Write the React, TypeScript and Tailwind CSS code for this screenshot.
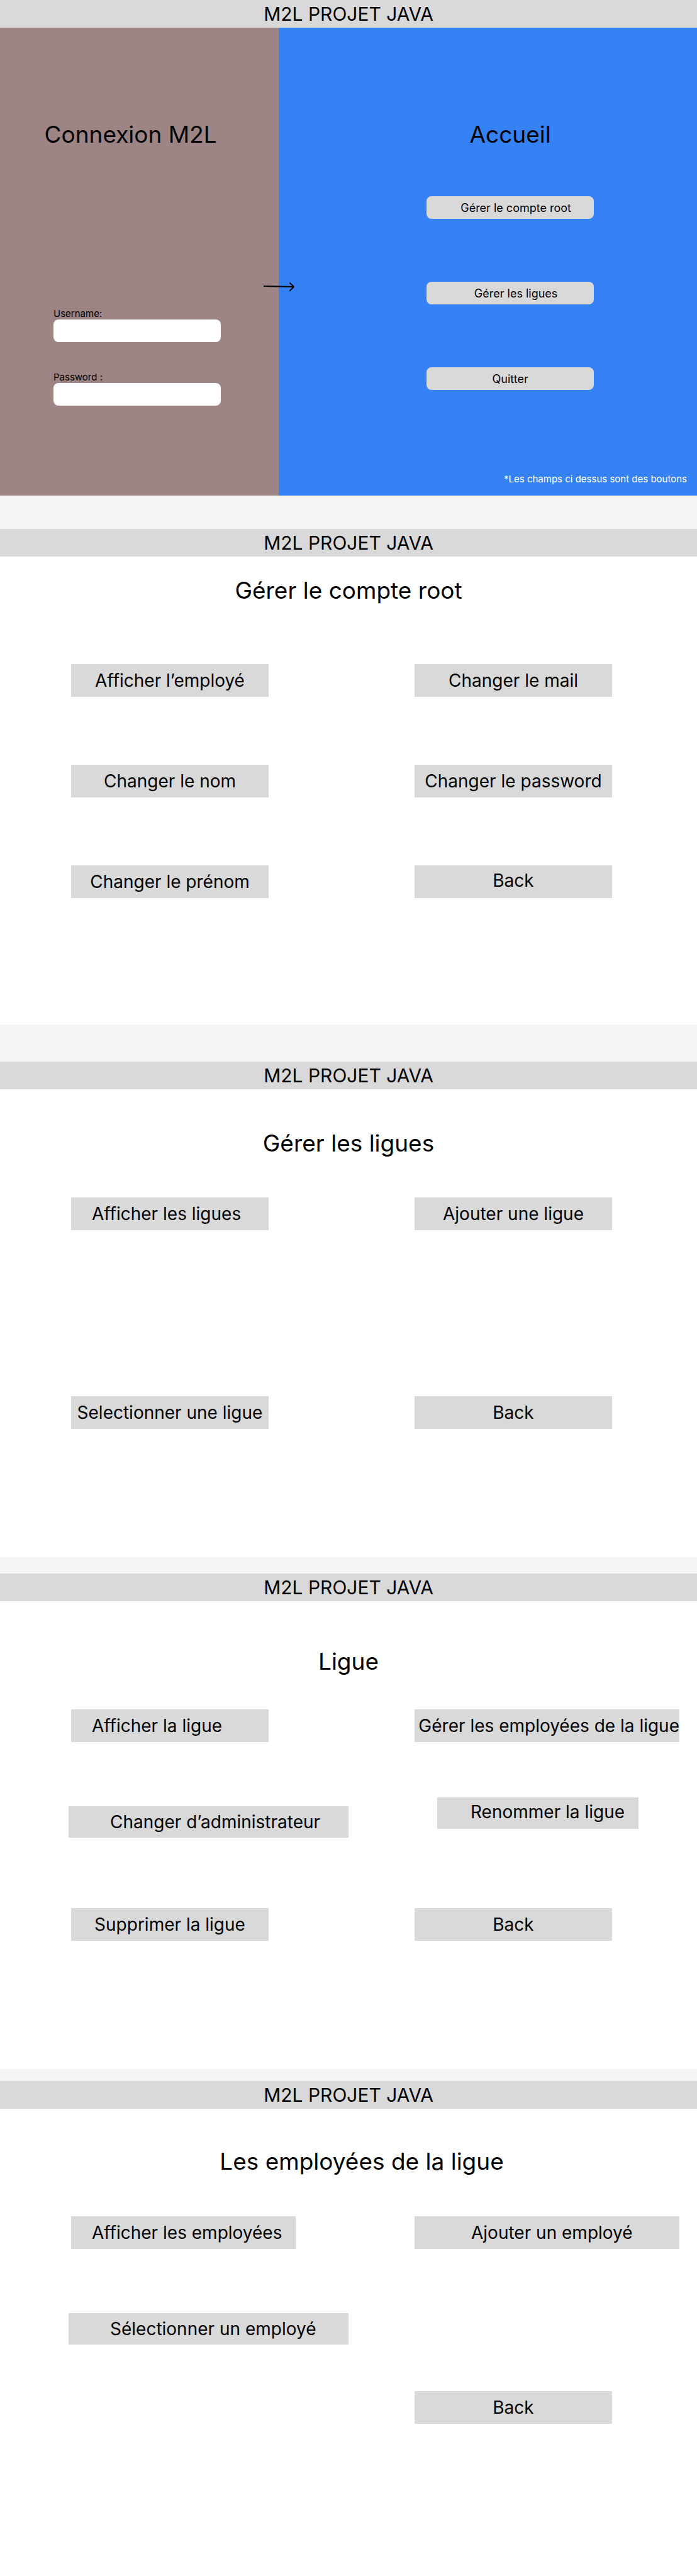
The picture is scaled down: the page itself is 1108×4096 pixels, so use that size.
import type { ReactNode } from "react";

function Header() {
  return (
    <header className="bg-[#d9d9d9] py-1 text-center text-[30px] leading-9">
      M2L PROJET JAVA
    </header>
  );
}

function Title({ children, className = "" }: { children: ReactNode; className?: string }) {
  return <h2 className={`text-center text-[37px] leading-11 ${className}`}>{children}</h2>;
}

function Field({ id, label, type }: { id: string; label: string; type: string }) {
  return (
    <div className="flex flex-col">
      <label htmlFor={id} className="text-[15px] leading-[18px]">
        {label}
      </label>
      <input id={id} type={type} className="h-9 w-[266px] rounded-lg bg-white px-3 text-[15px]" />
    </div>
  );
}

function HomeButton({ children, className = "" }: { children: ReactNode; className?: string }) {
  return (
    <button type="button" className={`h-9 w-[266px] rounded-lg bg-[#d9d9d9] text-[18px] ${className}`}>
      {children}
    </button>
  );
}

function MenuButton({
  children,
  className = "h-13 w-[314px] justify-center",
}: {
  children: ReactNode;
  className?: string;
}) {
  return (
    <button
      type="button"
      className={`flex items-center bg-[#d9d9d9] text-[28px] leading-9 whitespace-nowrap ${className}`}
    >
      {children}
    </button>
  );
}

function Columns({ left, right }: { left: ReactNode; right: ReactNode }) {
  return (
    <div className="grid grid-cols-[546fr_449fr] pl-[113px]">
      <div className="flex min-w-0 flex-col items-start">{left}</div>
      <div className="flex min-w-0 flex-col items-start">{right}</div>
    </div>
  );
}

function HomeScreen() {
  return (
    <section>
      <Header />
      <div className="relative flex">
        <div className="w-2/5 bg-[#9d8585] pt-37 pb-[143px]">
          <Title className="pr-7">Connexion M2L</Title>
          <form className="mt-[254px] flex flex-col gap-[47px] pl-[85px]">
            <Field id="username" label="Username:" type="text" />
            <Field id="password" label="Password :" type="password" />
          </form>
        </div>
        <div className="flex w-3/5 flex-col bg-[#3582f5] pt-37 pb-4">
          <div className="flex flex-col items-center pl-[71px]">
            <Title>Accueil</Title>
            <div className="mt-19 flex flex-col gap-25">
              <HomeButton className="pl-[18px]">Gérer le compte root</HomeButton>
              <HomeButton className="pl-[18px]">Gérer les ligues</HomeButton>
              <HomeButton>Quitter</HomeButton>
            </div>
          </div>
          <p className="mt-auto pr-4 text-right text-[15px] leading-5 text-white">
            *Les champs ci dessus sont des boutons
          </p>
        </div>
        <svg
          className="absolute top-101 left-2/5 -ml-6 h-4 w-[50px]"
          viewBox="0 0 50 16"
          fill="none"
          stroke="black"
          strokeWidth="2"
          aria-hidden="true"
        >
          <path d="M0 7L48 8" />
          <path d="M42 2L48 8L42 14" strokeLinecap="round" strokeLinejoin="round" />
        </svg>
      </div>
    </section>
  );
}

function RootScreen() {
  return (
    <section className="mt-[53px] bg-white pb-[201px]">
      <Header />
      <Title className="mt-8 mb-[95px]">Gérer le compte root</Title>
      <Columns
        left={
          <div className="flex flex-col gap-27">
            <MenuButton>Afficher l’employé</MenuButton>
            <MenuButton>Changer le nom</MenuButton>
            <MenuButton>Changer le prénom</MenuButton>
          </div>
        }
        right={
          <div className="flex flex-col gap-27">
            <MenuButton>Changer le mail</MenuButton>
            <MenuButton>Changer le password</MenuButton>
            <MenuButton className="h-13 w-[314px] justify-center pb-1">Back</MenuButton>
          </div>
        }
      />
    </section>
  );
}

function LeaguesScreen() {
  return (
    <section className="mt-[59px] bg-white pb-51">
      <Header />
      <Title className="mt-16 mb-16">Gérer les ligues</Title>
      <Columns
        left={
          <div className="flex flex-col gap-66">
            <MenuButton className="h-13 w-[314px] pl-[33px]">Afficher les ligues</MenuButton>
            <MenuButton>Selectionner une ligue</MenuButton>
          </div>
        }
        right={
          <div className="flex flex-col gap-66">
            <MenuButton>Ajouter une ligue</MenuButton>
            <MenuButton>Back</MenuButton>
          </div>
        }
      />
    </section>
  );
}

function LeagueScreen() {
  return (
    <section className="mt-[26px] bg-white pb-51">
      <Header />
      <Title className="mt-[74px] mb-[54px]">Ligue</Title>
      <Columns
        left={
          <>
            <MenuButton className="h-13 w-[314px] pl-[33px]">Afficher la ligue</MenuButton>
            <MenuButton className="mt-[102px] -ml-1 h-[50px] w-[445px] pl-[66px]">
              Changer d’administrateur
            </MenuButton>
            <div className="mt-28">
              <MenuButton>Supprimer la ligue</MenuButton>
            </div>
          </>
        }
        right={
          <>
            <MenuButton className="h-13 w-[421px] justify-end">
              Gérer les employées de la ligue
            </MenuButton>
            <MenuButton className="mt-22 ml-9 h-[50px] w-[320px] pb-1 pl-[53px]">
              Renommer la ligue
            </MenuButton>
            <div className="mt-[126px]">
              <MenuButton>Back</MenuButton>
            </div>
          </>
        }
      />
    </section>
  );
}

function EmployeesScreen() {
  return (
    <section className="mt-[19px] bg-white pb-[242px]">
      <Header />
      <Title className="mt-[62px] mb-[65px] pl-[42px]">Les employées de la ligue</Title>
      <Columns
        left={
          <>
            <MenuButton className="h-13 w-[357px] pl-[33px]">Afficher les employées</MenuButton>
            <MenuButton className="mt-[102px] -ml-1 h-[50px] w-[445px] pl-[66px]">
              Sélectionner un employé
            </MenuButton>
          </>
        }
        right={
          <>
            <MenuButton className="h-13 w-[421px] pl-[90px]">Ajouter un employé</MenuButton>
            <div className="mt-[226px]">
              <MenuButton>Back</MenuButton>
            </div>
          </>
        }
      />
    </section>
  );
}

export default function App() {
  return (
    <main className="bg-[#f5f5f5] font-['Inter',sans-serif] text-black">
      <HomeScreen />
      <RootScreen />
      <LeaguesScreen />
      <LeagueScreen />
      <EmployeesScreen />
    </main>
  );
}
